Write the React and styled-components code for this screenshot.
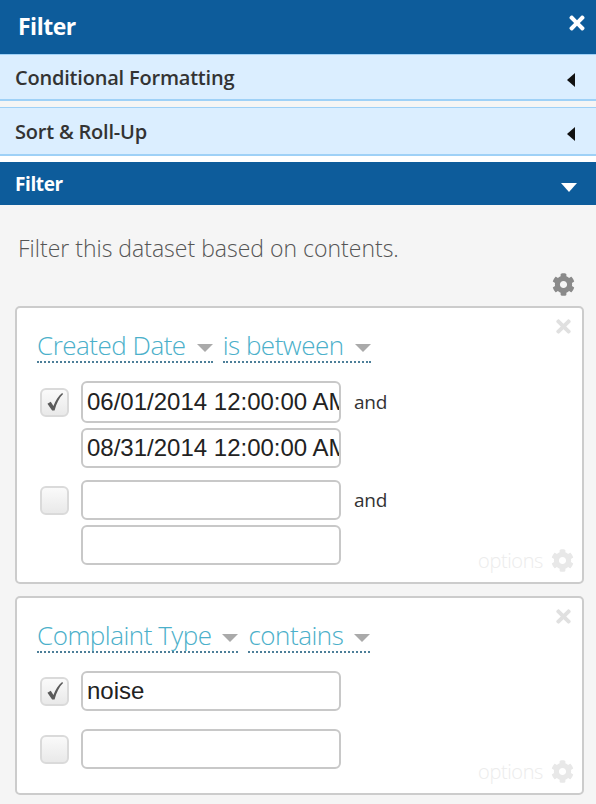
import React from "react";
import styled, { createGlobalStyle } from "styled-components";
import { FaCog, FaTimes } from "react-icons/fa";

const GlobalStyle = createGlobalStyle`
  html, body { margin: 0; padding: 0; background: #f5f5f5; }
  * { box-sizing: border-box; }
`;

const UI = `"Open Sans", "Noto Sans", sans-serif`;

const Panel = styled.div`
  width: 596px;
  min-height: 804px;
  display: flex;
  flex-direction: column;
  background: #f5f5f5;
  font-family: ${UI};
`;

const TopBar = styled.div`
  height: 54px;
  background: #0d5c9b;
  display: flex;
  align-items: center;
  justify-content: space-between;
  padding: 0 8px 2px 18px;
  color: #fff;
`;

const TopTitle = styled.div`
  font-size: 23px;
  font-weight: 700;
  letter-spacing: -0.5px;
`;

const CloseBtn = styled(FaTimes)`
  width: 22px;
  height: 22px;
  color: #fff;
  margin-top: -6px;
`;

const LightHeader = styled.div`
  height: ${(p) => p.$h}px;
  background: #dbeeff;
  border-top: 1px solid #9fd1f7;
  border-bottom: 2px solid #9fd1f7;
  display: flex;
  align-items: center;
  justify-content: space-between;
  padding: 0 21px 0 15px;
  color: #333;
  font-size: 20px;
  font-weight: 600;
  letter-spacing: -0.2px;
  margin-bottom: ${(p) => p.$gap}px;
`;

const GapWhite = styled.div`
  height: 6px;
  background: #fff;
`;

const LeftTri = styled.span`
  width: 0;
  height: 0;
  border-top: 7px solid transparent;
  border-bottom: 7px solid transparent;
  border-right: 8px solid #111;
  margin-top: 6px;
`;

const DarkHeader = styled.div`
  height: 43px;
  background: #0d5c9b;
  display: flex;
  align-items: center;
  justify-content: space-between;
  padding: 0 19px 0 15px;
  color: #fff;
  font-size: 19px;
  font-weight: 700;
  letter-spacing: -0.4px;
`;

const DownTri = styled.span`
  width: 0;
  height: 0;
  border-left: 8px solid transparent;
  border-right: 8px solid transparent;
  border-top: 9px solid #fff;
  margin-top: 8px;
`;

const Body = styled.div`
  display: flex;
  flex-direction: column;
  padding: 28px 12px 0 15px;
`;

const Description = styled.div`
  font-size: 23px;
  font-weight: 300;
  color: #555;
  padding-left: 3px;
  line-height: 30px;
`;

const GearRow = styled.div`
  display: flex;
  justify-content: flex-end;
  padding: 10px 9px 0 0;
  height: 43px;
`;

const Gear = styled(FaCog)`
  width: 23px;
  height: 23px;
  color: ${(p) => p.$c};
`;

const Card = styled.div`
  position: relative;
  background: #fff;
  border: 2px solid #ccc;
  border-radius: 5px;
  padding: 22px 20px 8px 20px;
  margin-bottom: 12px;
  display: flex;
  flex-direction: column;
`;

const CardClose = styled(FaTimes)`
  position: absolute;
  top: 8px;
  right: 8px;
  width: 21px;
  height: 21px;
  color: #e0e0e0;
`;

const Selectors = styled.div`
  display: flex;
  gap: 10px;
  margin-bottom: 18px;
`;

const Selector = styled.div`
  display: flex;
  align-items: center;
  gap: 11px;
  color: #4bb0ca;
  font-size: 26px;
  font-weight: 300;
  letter-spacing: -0.5px;
  line-height: 31px;
  border-bottom: 2px dotted #4d7f99;
`;

const GreyCaret = styled.span`
  width: 0;
  height: 0;
  border-left: 8px solid transparent;
  border-right: 8px solid transparent;
  border-top: 8px solid #aaa;
  margin-top: 4px;
`;

const Group = styled.div`
  display: grid;
  grid-template-columns: 44px 260px auto;
  row-gap: 5px;
  align-items: center;
  margin-bottom: ${(p) => p.$mb}px;
`;

const Check = styled.div`
  width: 29px;
  height: 29px;
  margin-left: 3px;
  border: 2px solid #dadada;
  border-radius: 6px;
  background: linear-gradient(#fafafa, #e9e9e9);
  display: flex;
  align-items: center;
  justify-content: center;
`;

const Input = styled.div`
  grid-column: 2;
  width: 260px;
  height: ${(p) => p.$h}px;
  border: 2px solid #c8c8c8;
  border-radius: 6px;
  background: #fff;
  font-family: "Liberation Sans", Arial, sans-serif;
  font-size: 24px;
  color: #222;
  padding: 0 0 0 4px;
  display: flex;
  align-items: center;
  overflow: hidden;
  white-space: nowrap;
`;

const And = styled.span`
  grid-column: 3;
  font-size: 19px;
  color: #333;
  padding-left: 13px;
  letter-spacing: -0.2px;
`;

const Options = styled.div`
  display: flex;
  justify-content: flex-end;
  align-items: center;
  gap: 8px;
  color: #ececec;
  font-size: 20px;
  font-weight: 300;
  letter-spacing: -0.4px;
  margin-top: ${(p) => p.$mt}px;
  margin-right: -12px;
`;

const CheckMark = () => (
  <svg width="18" height="20" viewBox="0 0 16 18">
    <path
      d="M1.2 10.6 L4.2 8.8 L6.6 12.6 C8.6 7.4 11 3.6 14.4 0.8 L15.3 1.9 C11.8 5.2 9.4 10.2 7.6 16.6 L5.4 16.6 Z"
      fill="#5a5a5a"
    />
  </svg>
);

const Row = ({ check, checked, value, h, and }) => (
  <>
    {check ? <Check>{checked && <CheckMark />}</Check> : <span />}
    <Input $h={h}>{value}</Input>
    {and ? <And>and</And> : <span />}
  </>
);

export default function App() {
  return (
    <>
      <GlobalStyle />
      <Panel>
        <TopBar>
          <TopTitle>Filter</TopTitle>
          <CloseBtn />
        </TopBar>
        <LightHeader $h={47} $gap={6}>
          <span>Conditional Formatting</span>
          <LeftTri />
        </LightHeader>
        <LightHeader $h={49} $gap={0}>
          <span>Sort &amp; Roll-Up</span>
          <LeftTri />
        </LightHeader>
        <GapWhite />
        <DarkHeader>
          <span>Filter</span>
          <DownTri />
        </DarkHeader>
        <Body>
          <Description>Filter this dataset based on contents.</Description>
          <GearRow>
            <Gear $c="#8a8a8a" />
          </GearRow>
          <Card>
            <CardClose />
            <Selectors>
              <Selector>
                Created Date <GreyCaret />
              </Selector>
              <Selector>
                is between <GreyCaret />
              </Selector>
            </Selectors>
            <Group $mb={12}>
              <Row check checked h={42} value="06/01/2014 12:00:00 AM" and />
              <Row h={40} value="08/31/2014 12:00:00 AM" />
            </Group>
            <Group $mb={0}>
              <Row check h={40} and />
              <Row h={40} />
            </Group>
            <Options $mt={-18}>
              options <Gear $c="#e8e8e8" />
            </Options>
          </Card>
          <Card>
            <CardClose />
            <Selectors>
              <Selector>
                Complaint Type <GreyCaret />
              </Selector>
              <Selector>
                contains <GreyCaret />
              </Selector>
            </Selectors>
            <Group $mb={18}>
              <Row check checked h={40} value="noise" />
            </Group>
            <Group $mb={0}>
              <Row check h={40} />
            </Group>
            <Options $mt={-11}>
              options <Gear $c="#e8e8e8" />
            </Options>
          </Card>
        </Body>
      </Panel>
    </>
  );
}
